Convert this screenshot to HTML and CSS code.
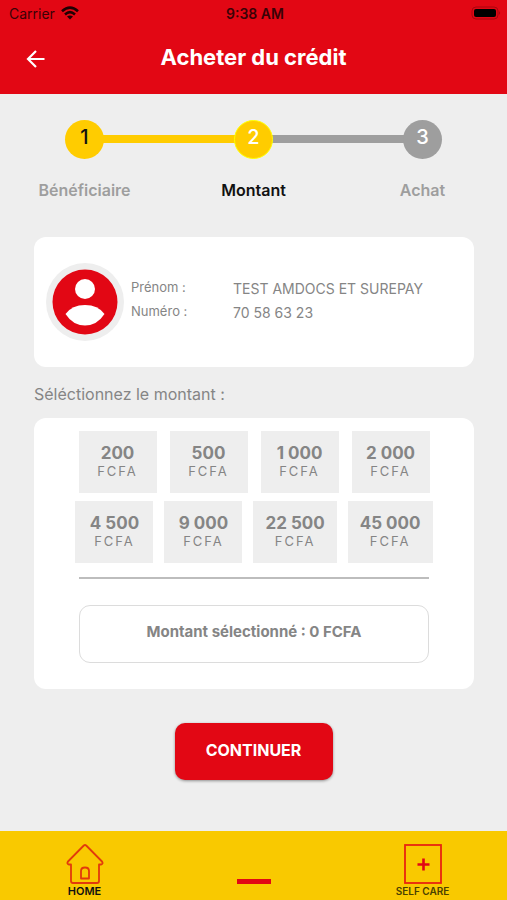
FILE: index.html
```html
<!DOCTYPE html>
<html lang="fr">
<head>
<meta charset="utf-8">
<meta name="viewport" content="width=device-width, initial-scale=1">
<title>Acheter du crédit</title>
<link rel="stylesheet" href="styles.css">
</head>
<body>
<header class="top">
  <div class="status">
    <span class="carrier">Carrier
      <svg width="18" height="14" viewBox="0 0 18 14" aria-hidden="true"><g fill="none" stroke="currentColor" stroke-width="2.6"><path d="M1 5.2Q9-2 17 5.2"/><path d="M4 8.4Q9 4 14 8.4"/></g><path d="M6 10.6Q9 8.2 12 10.6L9 13.6Z" fill="currentColor"/></svg>
    </span>
    <span class="time">9:38 AM</span>
    <svg class="battery" width="30" height="14" viewBox="0 0 30 14" aria-hidden="true"><rect x="1" y="1" width="26" height="12" rx="4" fill="none" stroke="#a8060f"/><rect x="3" y="3" width="22" height="8" rx="2"/><path d="M28.300 5Q30 7 28.300 9Z" fill="#8c0610"/></svg>
  </div>
  <div class="bar">
    <button class="back" type="button" aria-label="Retour">
      <svg width="20" height="20" viewBox="0 0 20 20" aria-hidden="true"><path d="M18.500 10H2.500M10 2L2 10l8 8" fill="none" stroke="#fff" stroke-width="2.200"/></svg>
    </button>
    <h1>Acheter du crédit</h1>
  </div>
</header>

<main>
  <ol class="steps">
    <li class="step done"><span class="dot">1</span><span class="name">Bénéficiaire</span></li>
    <li class="step current" aria-current="step"><span class="dot">2</span><span class="name">Montant</span></li>
    <li class="step"><span class="dot">3</span><span class="name">Achat</span></li>
  </ol>

  <section class="card person">
    <svg class="avatar" width="78" height="78" viewBox="0 0 78 78" aria-hidden="true"><circle cx="39" cy="39" r="39" fill="#eee"/><circle cx="39" cy="39" r="32.500" fill="#e20714"/><circle cx="39" cy="26" r="10" fill="#fff"/><path d="M19.500 51Q26 42 39 42T58.500 51Q51 62.500 39 62.500T19.500 51Z" fill="#fff"/></svg>
    <dl>
      <dt>Prénom :</dt><dd>TEST AMDOCS ET SUREPAY</dd>
      <dt>Numéro :</dt><dd>70 58 63 23</dd>
    </dl>
  </section>

  <h2>Séléctionnez le montant :</h2>
  <section class="card picker">
    <div class="row first">
      <button class="amount" type="button"><b>200</b><span>FCFA</span></button>
      <button class="amount" type="button"><b>500</b><span>FCFA</span></button>
      <button class="amount" type="button"><b>1 000</b><span>FCFA</span></button>
      <button class="amount" type="button"><b>2 000</b><span>FCFA</span></button>
    </div>
    <div class="row">
      <button class="amount" type="button"><b>4 500</b><span>FCFA</span></button>
      <button class="amount" type="button"><b>9 000</b><span>FCFA</span></button>
      <button class="amount" type="button"><b>22 500</b><span>FCFA</span></button>
      <button class="amount" type="button"><b>45 000</b><span>FCFA</span></button>
    </div>
    <hr>
    <output class="total">Montant sélectionné : 0 FCFA</output>
  </section>

  <button class="continue" type="button">CONTINUER</button>
</main>

<nav class="tabs">
  <a class="tab home" href="#home">
    <svg width="38" height="40" viewBox="0 0 38 40" aria-hidden="true"><g fill="none" stroke="#e23a0c" stroke-width="1.800" stroke-linejoin="round"><path d="M17.800 1.500Q19 .500 20.200 1.500L36 17.500Q37.500 20 35 20.500H33V37Q33 39 31 39H7Q5 39 5 37V20.500H3Q.500 20 2 17.500Z"/><path d="M15 34.500V27Q15 23.500 19 23.500T23 27V34.500Z"/></g></svg>
    HOME
  </a>
  <span class="handle"></span>
  <a class="tab care" href="#selfcare">
    <svg width="38" height="40" viewBox="0 0 38 40" aria-hidden="true"><rect x="1" y="1" width="36" height="38" fill="none" stroke="#e8240f" stroke-width="1.800"/><path d="M19.500 14.500V26.500M13.500 20.500H25.500" stroke="#e20714" stroke-width="2.600"/></svg>
    SELF CARE
  </a>
</nav>
</body>
</html>
```
FILE: styles.css
```css
* { box-sizing: border-box; }

body {
  margin: 0;
  min-height: 100vh;
  display: flex;
  flex-direction: column;
  background: #eee;
  color: #858585;
  font-family: Inter, "Liberation Sans", sans-serif;
}

button { font: inherit; color: inherit; border: 0; padding: 0; cursor: pointer; }

h1, h2, ol, dl, dd { margin: 0; padding: 0; }

.top { height: 94px; background: #e20714; }

.status {
  display: grid;
  grid-template-columns: 1fr auto 1fr;
  align-items: center;
  height: 26px;
  padding: 0 6px 0 9px;
  color: #3a0206;
  font-size: 14px;
}
.carrier { display: flex; align-items: center; gap: 6px; }
.carrier svg { color: #200103; }
.time { font-weight: 600; }
.battery { justify-self: end; }

.bar {
  display: grid;
  grid-template-columns: 24px 1fr 24px;
  align-items: center;
  height: 62px;
  padding: 0 24px;
}
.back { display: flex; background: none; padding: 4px 2px 0; }
h1 { color: #fff; font-size: 22px; font-weight: 700; text-align: center; }

main { flex: 1; display: flex; flex-direction: column; padding-bottom: 24px; }

.steps {
  display: grid;
  grid-template-columns: repeat(3, 1fr);
  padding: 26px 0 36px;
  list-style: none;
}
.step {
  position: relative;
  display: flex;
  flex-direction: column;
  align-items: center;
  gap: 20px;
}
.step + .step::before {
  content: "";
  position: absolute;
  top: 15px;
  right: 50%;
  width: 100%;
  height: 8px;
  background: #9e9e9e;
}
.steps .current::before { background: #fc0; }
.dot {
  position: relative;
  z-index: 1;
  width: 39px;
  height: 39px;
  border-radius: 50%;
  background: #9e9e9e;
  color: #fff;
  font-size: 20px;
  font-weight: 500;
  line-height: 35px;
  text-align: center;
}
.steps .done { z-index: 3; }
.steps .current { z-index: 2; }
.done .dot { background: #fc0; color: #111; }
.current .dot { background: #fc0; border: 1px solid #ff0; line-height: 33px; }
.name { color: #9e9e9e; font-size: 16px; font-weight: 600; line-height: 22px; }
.current .name { color: #111; }

.card { margin: 0 33px 0 34px; background: #fff; border-radius: 12px; }

.person { display: flex; align-items: center; min-height: 130px; padding: 0 12px; }
.person dl {
  flex: 1;
  display: grid;
  grid-template-columns: 102px 1fr;
  padding: 0 0 2px 7px;
}
.person dt { font-size: 13px; line-height: 20px; }
.person dd { font-size: 14px; line-height: 24px; white-space: nowrap; }

h2 { margin: 16px 34px 12px; font-size: 16px; font-weight: 400; line-height: 23px; }

.picker { padding: 13px 40px 26px; }
.row { display: flex; justify-content: center; gap: 11px; }
.first { gap: 13px; margin-bottom: 8px; }
.amount {
  display: flex;
  flex-direction: column;
  align-items: center;
  min-width: 78px;
  height: 62px;
  padding: 12px 12px 0;
  background: #eee;
}
.amount b { font-size: 17px; line-height: 20px; white-space: nowrap; }
.amount span { font-size: 13px; line-height: 16px; letter-spacing: 2px; }

hr { margin: 14px 5px 26px; border: 0; height: 2px; background: #bdbdbd; }

.total {
  display: block;
  margin: 0 5px;
  height: 58px;
  border: 1px solid #dcdcdc;
  border-radius: 11px;
  font-size: 15px;
  font-weight: 700;
  line-height: 52px;
  text-align: center;
}

.continue {
  align-self: center;
  width: 158px;
  height: 57px;
  margin-top: 34px;
  padding-bottom: 3px;
  border-radius: 10px;
  background: #e20714;
  box-shadow: 0 1px 3px rgba(0, 0, 0, .4);
  color: #fff;
  font-size: 16px;
  font-weight: 700;
}

.tabs {
  display: grid;
  grid-template-columns: repeat(3, 1fr);
  justify-items: center;
  height: 69px;
  padding-top: 13px;
  background: #f9c900;
}
.tab {
  display: flex;
  flex-direction: column;
  align-items: center;
  font-size: 11px;
  font-weight: 600;
  line-height: 14px;
  text-decoration: none;
}
.home { color: #111; }
.care { color: #4b4100; font-size: 10px; }
.handle { width: 34px; height: 5px; margin-top: 35px; background: #e20714; }
```
